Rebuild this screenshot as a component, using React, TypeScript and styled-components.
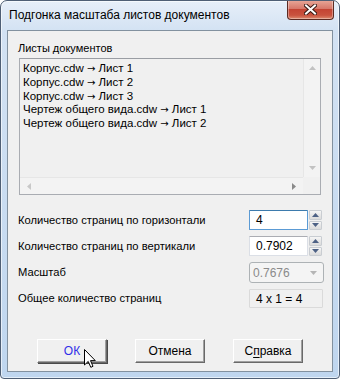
import styled, { createGlobalStyle } from "styled-components";

const GlobalStyle = createGlobalStyle`
  html, body {
    margin: 0;
    padding: 0;
    background: #ffffff;
  }
  body {
    font-family: "Liberation Sans", "Noto Sans", sans-serif;
    font-size: 11px;
    color: #000000;
  }
  * {
    box-sizing: border-box;
  }
`;

const items = [
  { file: "Корпус.cdw", sheet: "Лист 1" },
  { file: "Корпус.cdw", sheet: "Лист 2" },
  { file: "Корпус.cdw", sheet: "Лист 3" },
  { file: "Чертеж общего вида.cdw", sheet: "Лист 1" },
  { file: "Чертеж общего вида.cdw", sheet: "Лист 2" },
];

function Triangle({ dir, color }: { dir: "up" | "down" | "left" | "right"; color: string }) {
  const points = {
    up: "0,4 3.5,0 7,4",
    down: "0,0 7,0 3.5,4",
    left: "4,0 4,7 0,3.5",
    right: "0,0 4,3.5 0,7",
  }[dir];
  const vertical = dir === "up" || dir === "down";
  return (
    <svg width={vertical ? 7 : 4} height={vertical ? 4 : 7} viewBox={vertical ? "0 0 7 4" : "0 0 4 7"}>
      <polygon points={points} fill={color} />
    </svg>
  );
}

function Spinner() {
  return (
    <SpinBox>
      <SpinButton>
        <Triangle dir="up" color="#4d6185" />
      </SpinButton>
      <SpinButton>
        <Triangle dir="down" color="#4d6185" />
      </SpinButton>
    </SpinBox>
  );
}

export default function App() {
  return (
    <>
      <GlobalStyle />
      <Window>
        <TitleBar>
          <Title>Подгонка масштаба листов документов</Title>
          <CloseButton>
            <svg width="13" height="11" viewBox="0 0 13 11">
              <path d="M2 1.5 L11 9.5 M11 1.5 L2 9.5" stroke="#3b1a14" strokeWidth="4" strokeLinecap="square" />
              <path d="M2 1.5 L11 9.5 M11 1.5 L2 9.5" stroke="#ffffff" strokeWidth="2" strokeLinecap="square" />
            </svg>
          </CloseButton>
        </TitleBar>

        <Client>
          <GroupLabel>Листы документов</GroupLabel>
          <ListBox>
            <ListContent>
              {items.map((item, i) => (
                <ListItem key={i}>
                  {item.file} <Arrow>→</Arrow> {item.sheet}
                </ListItem>
              ))}
            </ListContent>
            <VScroll>
              <Triangle dir="up" color="#c2c2c2" />
              <Triangle dir="down" color="#c2c2c2" />
            </VScroll>
            <HScroll>
              <Triangle dir="left" color="#c8c8c8" />
              <Triangle dir="right" color="#8a8a8a" />
            </HScroll>
            <Corner />
          </ListBox>

          <Fields>
            <FieldLabel>Количество страниц по горизонтали</FieldLabel>
            <SpinField>
              <TextInput $focused>4</TextInput>
              <Spinner />
            </SpinField>

            <FieldLabel>Количество страниц по вертикали</FieldLabel>
            <SpinField>
              <TextInput>0.7902</TextInput>
              <Spinner />
            </SpinField>

            <FieldLabel>Масштаб</FieldLabel>
            <ComboBox>
              <span>0.7676</span>
              <Triangle dir="down" color="#b5b5b5" />
            </ComboBox>

            <FieldLabel>Общее количество страниц</FieldLabel>
            <ReadOnlyBox>4 x 1 = 4</ReadOnlyBox>
          </Fields>

          <ButtonRow>
            <DialogButton $default>
              <OkText>ОК</OkText>
              <Cursor width="12" height="19" viewBox="0 0 12 19">
                <path d="M0.5 0.5 L0.5 16 L4.2 12.4 L6.8 18.3 L9 17.3 L6.5 11.6 L11.3 11.6 Z" fill="#ffffff" stroke="#000000" strokeWidth="1" strokeLinejoin="miter" />
              </Cursor>
            </DialogButton>
            <DialogButton>Отмена</DialogButton>
            <DialogButton>
              С<u>п</u>равка
            </DialogButton>
          </ButtonRow>
        </Client>
      </Window>
    </>
  );
}

const Window = styled.div`
  position: relative;
  width: 340px;
  height: 379px;
  display: flex;
  flex-direction: column;
  border: 1px solid #4f5f75;
  border-radius: 7px 7px 4px 4px;
  background: linear-gradient(180deg, #e7eff9 0px, #d3e2f3 30px, #bfd6ef 100%);
  box-shadow: inset 0 0 0 1px rgba(255, 255, 255, 0.6);
  overflow: hidden;
`;

const TitleBar = styled.div`
  height: 29px;
  display: flex;
  justify-content: space-between;
  align-items: flex-start;
  padding-left: 8px;
`;

const Title = styled.div`
  margin-top: 7px;
  font-size: 12px;
  line-height: 15px;
  color: #000000;
`;

const CloseButton = styled.div`
  margin-top: -1px;
  margin-right: 5px;
  width: 47px;
  height: 20px;
  display: flex;
  align-items: center;
  justify-content: center;
  border: 1px solid #5b2a22;
  border-top: none;
  border-radius: 0 0 4px 4px;
  background: linear-gradient(180deg, #e9a99a 0%, #d7786a 45%, #c44433 50%, #c9523e 80%, #dd8a6e 100%);
  box-shadow: inset 0 0 0 1px rgba(255, 255, 255, 0.35);
`;

const Client = styled.div`
  flex: 1;
  margin: 0 6px 6px 6px;
  border: 1px solid #82919f;
  background: #f0f0f0;
  display: flex;
  flex-direction: column;
  padding: 10px 0 0 10px;
`;

const GroupLabel = styled.div`
  line-height: 15px;
`;

const ListBox = styled.div`
  margin: 2px 0 0 1px;
  width: 302px;
  height: 137px;
  border: 1px solid #a9acb2;
  border-top-color: #9a9da3;
  background: #f0f0f0;
  display: grid;
  grid-template-columns: 1fr 17px;
  grid-template-rows: 1fr 17px;
`;

const ListContent = styled.div`
  padding: 3px 0 0 3px;
  overflow: hidden;
  white-space: nowrap;
`;

const ListItem = styled.div`
  line-height: 12.8px;
  font-size: 11.5px;
`;

const Arrow = styled.span`
  font-family: "DejaVu Sans", sans-serif;
  font-size: 10px;
`;

const VScroll = styled.div`
  display: flex;
  flex-direction: column;
  justify-content: space-between;
  align-items: center;
  padding: 7px 0 7px;
  background: #f3f3f3;
  border-left: 1px solid #e6e6e6;
`;

const HScroll = styled.div`
  display: flex;
  justify-content: space-between;
  align-items: center;
  padding: 0 7px;
  background: #f3f3f3;
  border-top: 1px solid #e6e6e6;
`;

const Corner = styled.div`
  background: #f0f0f0;
`;

const Fields = styled.div`
  margin-top: 15px;
  display: grid;
  grid-template-columns: 231px 74px;
  grid-template-rows: 20px 20px 21px 19px;
  row-gap: 6px;
  align-items: center;
`;

const FieldLabel = styled.div`
  line-height: 15px;
  font-size: 11.2px;
  color: #000000;
`;

const SpinField = styled.div`
  display: flex;
  height: 20px;
  width: 73px;
`;

const TextInput = styled.div<{ $focused?: boolean }>`
  width: 60px;
  height: 20px;
  padding-left: 6px;
  display: flex;
  align-items: center;
  font-size: 12px;
  background: #ffffff;
  border: 1px solid ${(p) => (p.$focused ? "#5b9bd5" : "#dbdfe6")};
  border-top-color: ${(p) => (p.$focused ? "#3d7bad" : "#abadb3")};
  border-radius: 1px;
`;

const SpinBox = styled.div`
  width: 13px;
  display: flex;
  flex-direction: column;
  gap: 1px;
  margin-left: 1px;
`;

const SpinButton = styled.div`
  flex: 1;
  display: flex;
  align-items: center;
  justify-content: center;
  border: 1px solid #c9cdd2;
  border-radius: 1px;
  background: linear-gradient(180deg, #f6f6f6 0%, #e7e7e7 50%, #dcdcdc 100%);
`;

const ComboBox = styled.div`
  height: 21px;
  width: 75px;
  display: flex;
  align-items: center;
  justify-content: space-between;
  padding: 0 6px 0 3px;
  font-size: 12px;
  color: #8a8a8a;
  border: 1px solid #adb2b5;
  border-radius: 3px;
  background: #f4f4f4;
`;

const ReadOnlyBox = styled.div`
  height: 19px;
  width: 74px;
  display: flex;
  align-items: center;
  padding-left: 6px;
  font-size: 12px;
  border: 1px solid #dadada;
  border-radius: 1px;
  background: #f0f0f0;
`;

const ButtonRow = styled.div`
  margin-top: 31px;
  padding-left: 19px;
  display: flex;
  gap: 28px;
`;

const DialogButton = styled.div<{ $default?: boolean }>`
  position: relative;
  width: 70px;
  height: 24px;
  display: flex;
  align-items: center;
  justify-content: center;
  font-size: 12px;
  background: #f0f0f0;
  border-top: 1px solid #ffffff;
  border-left: 1px solid #ffffff;
  border-right: 1px solid #696969;
  border-bottom: 1px solid #696969;
  box-shadow: ${(p) => (p.$default ? "1px 1px 0 #4a4a4a, inset -1px -1px 0 #a0a0a0" : "inset -1px -1px 0 #a0a0a0")};

  u {
    text-decoration: underline;
    text-underline-offset: 2px;
  }
`;

const OkText = styled.span`
  color: #3030e8;
`;

const Cursor = styled.svg`
  position: absolute;
  left: 46px;
  top: 9px;
`;
